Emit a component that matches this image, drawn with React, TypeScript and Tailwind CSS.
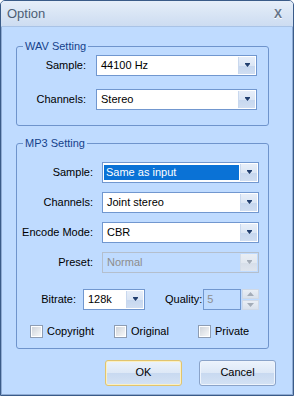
import React from "react";

const ui = "font-['Liberation_Sans',Arial,sans-serif]";

function Arrow({ disabled = false }: { disabled?: boolean }) {
  return (
    <svg width="5" height="4" viewBox="0 0 5 4">
      <path d="M0 0h5v1H0z M0 1h5L2.5 4z" fill={disabled ? "#a3acb8" : "#23406f"} />
    </svg>
  );
}

function DropButton({ disabled = false }: { disabled?: boolean }) {
  return (
    <div
      className={`w-[17px] h-full flex items-start justify-center pt-[6px] border-l ${
        disabled
          ? "border-[#d4dde9] bg-[linear-gradient(to_bottom,#e9eef5_0%,#e2e8f0_50%,#d6dee9_51%,#dfe5ee_100%)]"
          : "border-[#c9d8ee] bg-[linear-gradient(to_bottom,#e7eef9_0%,#dbe6f5_50%,#c6d7ef_51%,#d0def2_100%)]"
      }`}
    >
      <Arrow disabled={disabled} />
    </div>
  );
}

function Select({
  value,
  className,
  selected = false,
  disabled = false,
}: {
  value: string;
  className: string;
  selected?: boolean;
  disabled?: boolean;
}) {
  return (
    <div
      className={`flex h-[21px] border p-[1px] ${className} ${
        disabled ? "border-[#b4bfcd] bg-[#bfdbff]" : "border-[#7197cf] bg-white"
      }`}
    >
      <div className="flex-1 flex items-center pr-[1px]">
        {selected ? (
          <div className="flex-1 h-[15px] bg-[#0a72d6] text-white pl-[2px] leading-[15px]">{value}</div>
        ) : (
          <span className={`pl-[3px] ${disabled ? "text-[#8d8d8d]" : "text-black"}`}>{value}</span>
        )}
      </div>
      <DropButton disabled={disabled} />
    </div>
  );
}

function Row({ label, labelW, gap, children }: { label: string; labelW: string; gap: string; children: React.ReactNode }) {
  return (
    <div className={`flex items-center ${gap}`}>
      <span className={`${labelW} text-right text-black`}>{label}</span>
      {children}
    </div>
  );
}

function Check({ label, className }: { label: string; className: string }) {
  return (
    <div className={`flex items-center gap-[4px] ${className}`}>
      <div className="w-[13px] h-[13px] border border-[#8e9db3] p-[1px] bg-white">
        <div className="w-full h-full bg-[linear-gradient(135deg,#cfd4db,#f7f8f9)]" />
      </div>
      <span className="text-black">{label}</span>
    </div>
  );
}

function Button({ label, isDefault = false }: { label: string; isDefault?: boolean }) {
  return (
    <div
      className={`w-[77px] h-[26px] rounded-[3px] border flex items-center justify-center text-black ${
        isDefault
          ? "border-[#e1c46e] shadow-[inset_0_0_0_1px_#fbf0c4]"
          : "border-[#8aa3c9] shadow-[inset_0_0_0_1px_#eef4fc]"
      } bg-[linear-gradient(to_bottom,#ecf3fc_0%,#dde8f6_50%,#c8d9f0_51%,#d4e2f4_100%)]`}
    >
      {label}
    </div>
  );
}

export default function App() {
  return (
    <div className={`w-[294px] h-[396px] ${ui} text-[11px] flex flex-col border border-[#3a5b88] rounded-t-[5px] overflow-hidden bg-[#bfdbff]`}>
      {/* Title bar */}
      <div className="h-[26px] shrink-0 flex items-center justify-between pl-[6px] pr-[11px] bg-[linear-gradient(to_bottom,#e6eef9_0%,#dae6f5_45%,#cddcf1_100%)] border-b border-[#a9c3e6]">
        <span className="text-[13px] text-[#4d5e75]">Option</span>
        <span className="text-[12px] font-bold text-[#66758a] [text-shadow:0_1px_0_#ffffff]">X</span>
      </div>

      {/* Body */}
      <div className="flex-1 flex flex-col pl-[14px] pr-[23px] pt-[12px] border-l border-r border-b border-[#8fabd3]">
        {/* WAV */}
        <fieldset className="border border-[#6f94cc] rounded-[3px] pb-[15px]">
          <legend className="ml-[6px] px-[2px] text-[#15428b] leading-[14px]">WAV Setting</legend>
          <div className="flex flex-col gap-[13px] mt-[2px]">
            <Row label="Sample:" labelW="w-[69px]" gap="gap-[10px]">
              <Select value="44100 Hz" className="w-[161px]" />
            </Row>
            <Row label="Channels:" labelW="w-[69px]" gap="gap-[10px]">
              <Select value="Stereo" className="w-[161px]" />
            </Row>
          </div>
        </fieldset>

        {/* MP3 */}
        <fieldset className="mt-[10px] border border-[#6f94cc] rounded-[3px] pb-[8px]">
          <legend className="ml-[6px] px-[2px] text-[#15428b] leading-[14px]">MP3 Setting</legend>
          <div className="flex flex-col gap-[9px] mt-[12px]">
            <Row label="Sample:" labelW="w-[76px]" gap="gap-[9px]">
              <Select value="Same as input" className="w-[157px]" selected />
            </Row>
            <Row label="Channels:" labelW="w-[76px]" gap="gap-[9px]">
              <Select value="Joint stereo" className="w-[157px]" />
            </Row>
            <Row label="Encode Mode:" labelW="w-[76px]" gap="gap-[9px]">
              <Select value="CBR" className="w-[157px]" />
            </Row>
            <Row label="Preset:" labelW="w-[76px]" gap="gap-[9px]">
              <Select value="Normal" className="w-[157px]" disabled />
            </Row>
          </div>

          <div className="flex items-center mt-[16px]">
            <span className="w-[59px] text-right text-black">Bitrate:</span>
            <Select value="128k" className="w-[62px] ml-[7px]" />
            <span className="ml-[20px] text-black">Quality:</span>
            <div className="ml-[1px] w-[38px] h-[21px] border border-[#7197cf] flex items-center pl-[3px] text-[#8d8d8d]">5</div>
            <div className="ml-[1px] w-[17px] h-[21px] flex flex-col gap-[1px]">
              <div className="flex-1 flex items-center justify-center bg-[linear-gradient(to_bottom,#e9eef5,#d9e1ec)] border border-[#d0d9e6]">
                <svg width="7" height="4" viewBox="0 0 7 4">
                  <path d="M3.5 0L7 4H0z" fill="#a3acb8" />
                </svg>
              </div>
              <div className="flex-1 flex items-center justify-center bg-[linear-gradient(to_bottom,#e9eef5,#d9e1ec)] border border-[#d0d9e6]">
                <svg width="7" height="4" viewBox="0 0 7 4">
                  <path d="M0 0h7L3.5 4z" fill="#a3acb8" />
                </svg>
              </div>
            </div>
          </div>

          <div className="flex items-center mt-[13px]">
            <Check label="Copyright" className="ml-[13px] w-[84px]" />
            <Check label="Original" className="w-[84px]" />
            <Check label="Private" className="" />
          </div>
        </fieldset>

        {/* Buttons */}
        <div className="flex justify-end gap-[17px] mt-[11px] mr-[-7px]">
          <Button label="OK" isDefault />
          <Button label="Cancel" />
        </div>
      </div>
    </div>
  );
}
